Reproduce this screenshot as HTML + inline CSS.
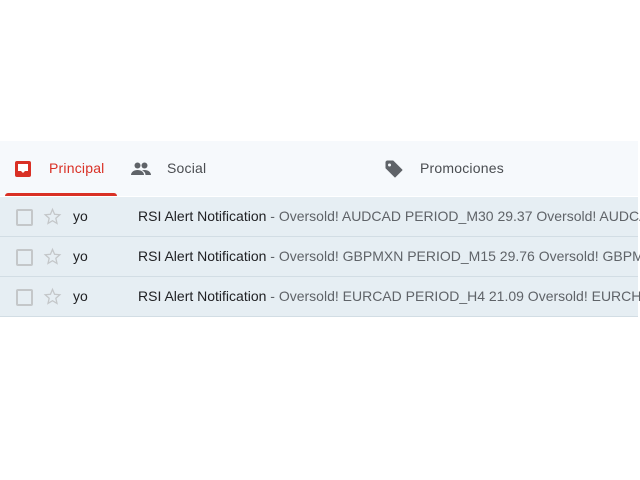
<!DOCTYPE html>
<html><head><style>
body{margin:0;width:640px;height:480px;background:#fff;font-family:"Liberation Sans",Arial,sans-serif;position:relative;overflow:hidden}
.tabs{position:absolute;left:0;top:141px;width:638px;height:55px;background:#f6f9fc}
.tab{position:absolute;top:0;height:55px;line-height:55px;font-size:14px;color:#4a4d51;font-weight:normal;letter-spacing:0.2px}
.ul{position:absolute;left:5px;top:193px;width:112px;height:3px;background:#d93025;border-radius:3px 3px 0 0}
.row{position:absolute;left:0;width:638px;height:39px;background:#e6eef3;border-bottom:1px solid #d2dde4;font-size:14px;line-height:39px;color:#202124}
.cb{position:absolute;left:16px;top:12px;width:13px;height:13px;border:2px solid #c4c7c9;border-radius:2px}
.star{position:absolute;left:43px;top:10px}
.from{position:absolute;left:73px}
.subj{position:absolute;left:138px;white-space:nowrap}
.subj span{color:#5f6368}
</style></head><body>
<div class="tabs">
 <div class="tab" style="left:14px;top:0"><svg width="18" height="18" viewBox="0 0 18 18" style="position:absolute;top:19px"><rect x="1" y="1" width="16" height="16" rx="2" fill="#d93025"/><path d="M4 4h10v7h-3l-2 2-2-2H4z" fill="#fff"/></svg></div>
 <div class="tab" style="left:49px;color:#d93025">Principal</div>
 <div class="tab" style="left:131px"><svg width="20" height="14" viewBox="0 0 20 14" style="position:absolute;top:21px"><circle cx="6.5" cy="3.5" r="3" fill="#5f6368"/><circle cx="13.5" cy="3.5" r="3" fill="#5f6368"/><path d="M0 13c0-3 3-5 6.5-5s6.5 2 6.5 5z" fill="#5f6368"/><path d="M11 8.3c.8-.2 1.7-.3 2.5-.3 3.5 0 6.5 2 6.5 5h-5.5c0-2-1.2-3.5-3.5-4.7z" fill="#5f6368"/></svg></div>
 <div class="tab" style="left:167px">Social</div>
 <div class="tab" style="left:385px"><svg width="18" height="18" viewBox="0 0 18 18" style="position:absolute;top:19px"><path d="M1 2v6l9 9 7-7-9-9H2z" fill="#5f6368" stroke="#5f6368" stroke-linejoin="round"/><circle cx="4.5" cy="5" r="1.5" fill="#f6f9fc"/></svg></div>
 <div class="tab" style="left:420px">Promociones</div>
</div>
<div class="ul"></div>
<div class="row" style="top:197px"><div class="cb"></div><svg class="star" width="19" height="19" viewBox="0 0 24 24"><path d="M12 3l2.6 6.2 6.7.6-5.1 4.4 1.5 6.6L12 17.3 6.3 20.8l1.5-6.6L2.7 9.8l6.7-.6z" fill="none" stroke="#c4c7c9" stroke-width="1.6"/></svg><div class="from">yo</div><div class="subj">RSI Alert Notification <span>- Oversold! AUDCAD PERIOD_M30 29.37 Oversold! AUDCAD</span></div></div>
<div class="row" style="top:237px"><div class="cb"></div><svg class="star" width="19" height="19" viewBox="0 0 24 24"><path d="M12 3l2.6 6.2 6.7.6-5.1 4.4 1.5 6.6L12 17.3 6.3 20.8l1.5-6.6L2.7 9.8l6.7-.6z" fill="none" stroke="#c4c7c9" stroke-width="1.6"/></svg><div class="from">yo</div><div class="subj">RSI Alert Notification <span>- Oversold! GBPMXN PERIOD_M15 29.76 Oversold! GBPMXN</span></div></div>
<div class="row" style="top:277px"><div class="cb"></div><svg class="star" width="19" height="19" viewBox="0 0 24 24"><path d="M12 3l2.6 6.2 6.7.6-5.1 4.4 1.5 6.6L12 17.3 6.3 20.8l1.5-6.6L2.7 9.8l6.7-.6z" fill="none" stroke="#c4c7c9" stroke-width="1.6"/></svg><div class="from">yo</div><div class="subj">RSI Alert Notification <span>- Oversold! EURCAD PERIOD_H4 21.09 Oversold! EURCHF</span></div></div>
</body></html>
